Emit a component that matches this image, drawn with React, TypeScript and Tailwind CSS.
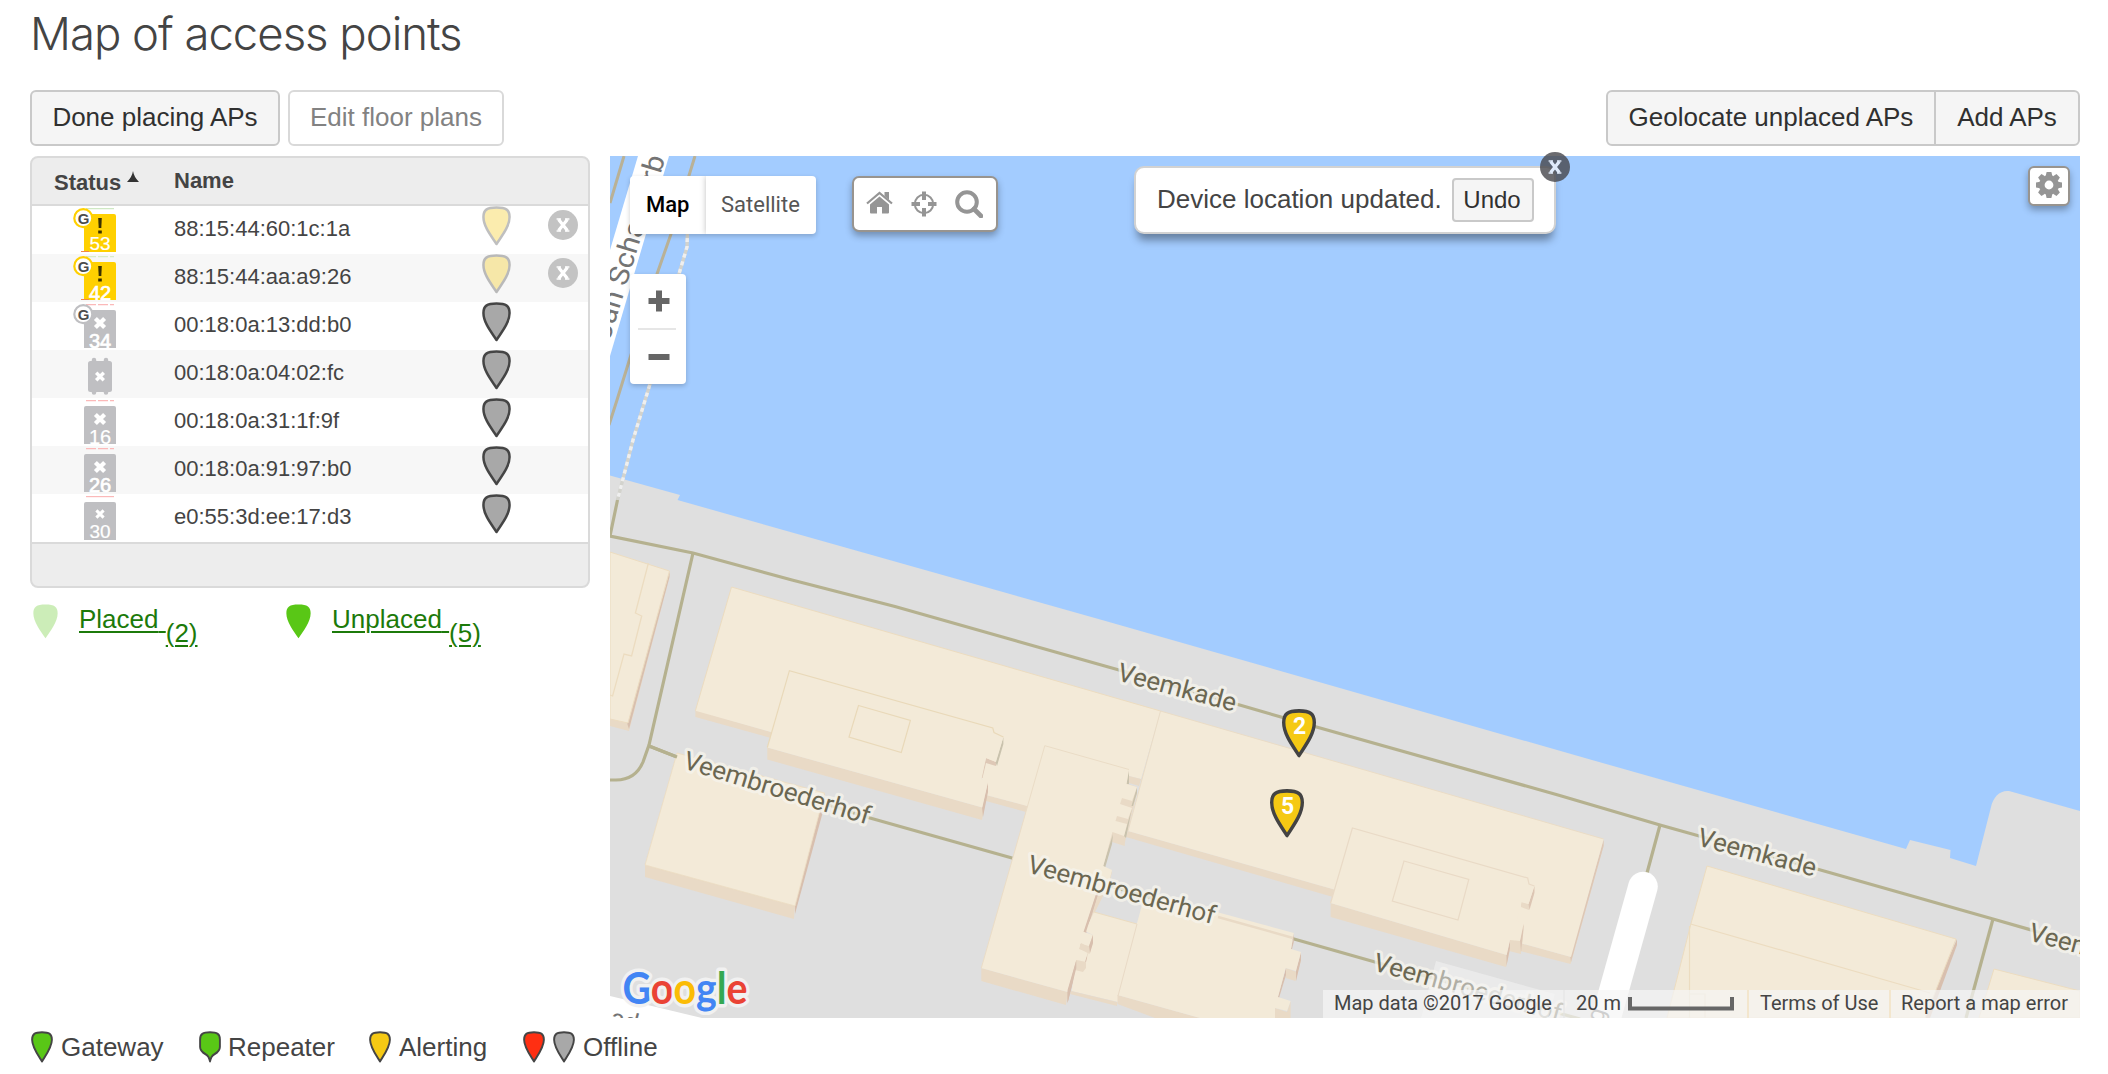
import React from "react";

const PIN_PATH =
  "M15 38 C9.5 30 1.5 20.5 1.5 11 C1.5 4 5 1.5 15 1.5 S28.5 4 28.5 11 C28.5 20.5 20.5 30 15 38 Z";
const REPEATER_PATH =
  "M15 38 C14 33 12.5 30.5 9 29 C4 26.5 1.5 24 1.5 20 V10.5 C1.5 4 5 1.5 15 1.5 S28.5 4 28.5 10.5 V20 C28.5 24 26 26.5 21 29 C17.5 30.5 16 33 15 38 Z";

function Pin({
  fill,
  stroke = "#454545",
  strokeWidth = 2.6,
  d = PIN_PATH,
  className,
}: {
  fill: string;
  stroke?: string;
  strokeWidth?: number;
  d?: string;
  className: string;
}) {
  return (
    <svg viewBox="0 0 30 40" preserveAspectRatio="none" className={className}>
      <path d={d} fill={fill} stroke={stroke} strokeWidth={strokeWidth} strokeLinejoin="round" />
    </svg>
  );
}

type Device = {
  name: string;
  count?: string;
  alerting?: boolean;
  gateway?: boolean;
  placed?: boolean;
  low?: boolean;
  bold?: boolean;
  edge?: string;
};

const devices: Device[] = [
  { name: "88:15:44:60:1c:1a", count: "53", alerting: true, gateway: true, placed: true, edge: "#cfe8c4" },
  { name: "88:15:44:aa:a9:26", count: "42", alerting: true, gateway: true, placed: true, low: true, bold: true, edge: "#d7ecc9" },
  { name: "00:18:0a:13:dd:b0", count: "34", gateway: true, low: true, bold: true, edge: "#fbb9b9" },
  { name: "00:18:0a:04:02:fc" },
  { name: "00:18:0a:31:1f:9f", count: "16", low: true, edge: "#fbb9b9" },
  { name: "00:18:0a:91:97:b0", count: "26", low: true, bold: true, edge: "#fbb9b9" },
  { name: "e0:55:3d:ee:17:d3", count: "30", edge: "#fbb9b9" },
];

function Cross({ cx, cy, r, w }: { cx: number; cy: number; r: number; w: number }) {
  return (
    <path
      d={`M${cx - r} ${cy - r} L${cx + r} ${cy + r} M${cx + r} ${cy - r} L${cx - r} ${cy + r}`}
      stroke="#fff"
      strokeWidth={w}
    />
  );
}

function StatusIcon({ d }: { d: Device }) {
  const color = d.alerting ? "#ffd000" : "#bfbfc2";
  return (
    <svg viewBox="0 0 46 44" className="h-[44px] w-[46px] overflow-visible">
      {d.edge && <path d="M14 .6 H42" stroke={d.edge} strokeWidth="1.2" strokeDasharray={d.low ? "10 2" : undefined} />}
      {d.count ? (
        <>
          <path d="M12 44 V8 Q12 6 14 6 H42 Q44 6 44 8 V44 Z" fill={color} />
          {d.alerting ? (
            <>
              <path d="M26.2 10 H29.8 L29.3 20 H26.7 Z" fill="#3a3000" />
              <rect x="26.2" y="22.5" width="3.6" height="3" fill="#3a3000" />
              <path d="M9 43.500 H17" stroke="#f08a4a" strokeWidth="1" />
            </>
          ) : (
            <Cross cx={28} cy={d.count === "30" ? 18 : 19} r={d.count === "30" ? 3.6 : 4.6} w={d.count === "30" ? 3 : 4.2} />
          )}
          <text
            x="28"
            y={d.low ? 44 : 42}
            textAnchor="middle"
            fontFamily="Liberation Sans, sans-serif"
            fontSize={d.low ? 20 : 19}
            stroke="#fff"
            strokeWidth={d.bold ? 0.7 : 0.2}
            fill="#fff"
          >
            {d.count}
          </text>
        </>
      ) : (
        <>
          <rect x="16" y="9" width="24" height="31" rx="2.5" fill={color} />
          <path d="M22 8 V40.500 M34 8 V40.500" stroke={color} strokeWidth="4.500" strokeLinecap="round" />
          <Cross cx={28} cy={24.5} r={3.8} w={3.4} />
        </>
      )}
      {d.gateway && (
        <>
          <circle cx="11.300" cy="10.200" r="9" fill="#fff" stroke={color} strokeWidth="2.200" />
          <text
            x="11.500"
            y="15.500"
            textAnchor="middle"
            fontFamily="Liberation Sans, sans-serif"
            fontSize="15"
            fontWeight="700"
            fill="#4c4c4c"
          >
            G
          </text>
        </>
      )}
    </svg>
  );
}

function CloseDot({ className, fill, mark = "#fff" }: { className: string; fill: string; mark?: string }) {
  return (
    <svg viewBox="0 0 30 30" className={className}>
      <circle cx="15" cy="15" r="15" fill={fill} />
      <path d="M10.600 9.500 L19.400 20.500 M19.400 9.500 L10.600 20.500" stroke={mark} strokeWidth="3.200" />
      <path d="M8.600 9 H13 M17 9 H21.400 M8.600 21 H13 M17 21 H21.400" stroke={mark} strokeWidth="1.600" />
    </svg>
  );
}

function DeviceTable() {
  return (
    <div className="h-[432px] w-[560px] overflow-hidden rounded-lg border-2 border-[#dadada] bg-[#ededed] text-[22px] text-[#444]">
      <div className="flex h-[48px] items-center border-b-2 border-[#dadada] pl-[22px] font-bold">
        <div className="flex w-[120px] items-center gap-1.5 pt-[3px]">
          Status
          <svg viewBox="0 0 12 11" className="mb-[12px] h-[11px] w-[12px]">
            <path d="M6 0 Q7 6 12 11 H0 Q5 6 6 0 Z" fill="#333" />
          </svg>
        </div>
        <div className="pb-[2px]">Name</div>
      </div>
      {devices.map((d, i) => (
        <div key={d.name} className={`flex h-[48px] items-start ${i % 2 ? "bg-[#f7f7f7]" : "bg-white"}`}>
          <div className="w-[142px] pt-[2px] pl-[40px]">
            <StatusIcon d={d} />
          </div>
          <div className="w-[308px] leading-[45px]">{d.name}</div>
          <Pin
            fill={d.placed ? "#f5c914" : "#a8a8a8"}
            className={d.placed ? "h-[40px] w-[29px] opacity-[.34]" : "h-[40px] w-[29px]"}
          />
          {d.placed && <CloseDot className="mt-1 ml-[37px] h-[30px] w-[30px]" fill="#c3c3c3" />}
        </div>
      ))}
      <div className="h-[46px] border-t-2 border-[#dadada]" />
    </div>
  );
}

function FilterLink({ label, count, faded }: { label: string; count: string; faded?: boolean }) {
  return (
    <div className="flex items-start">
      <Pin fill="#59c716" stroke="none" className={faded ? "-ml-px mt-[2px] h-[37px] w-[27px] opacity-30" : "-ml-px mt-[2px] h-[37px] w-[27px]"} />
      <a className="ml-5 leading-[36px] whitespace-pre text-[#1c7a0a] underline decoration-2 underline-offset-[3px]">{label} </a>
      <a className="mt-[14px] leading-[36px] text-[#1c7a0a] underline decoration-2 underline-offset-[3px]">{count}</a>
    </div>
  );
}

function StreetLabel({ x, y, angle, length, children }: { x: number; y: number; angle: number; length?: number; children: string }) {
  return (
    <text
      transform={`translate(${x} ${y}) rotate(${angle})`}
      textLength={length}
      lengthAdjust="spacingAndGlyphs"
      fontFamily="Roboto, sans-serif"
      fontSize="25.500"
      fill="#6b6752"
      stroke="#f6f4ec"
      strokeOpacity=".8"
      strokeWidth="6"
      strokeLinejoin="round"
      paintOrder="stroke"
    >
      {children}
    </text>
  );
}

const ROOF = "#f3ead8";
const WALL = "#e9dac6";
const EDGE = "#ecdcc0";
const SHADE = "#d8bfae";
const ROAD = "#b5b18f";

function MapCanvas() {
  return (
    <svg viewBox="610 156 1470 862" className="block h-[862px] w-[1470px]">
      <rect x="610" y="156" width="1470" height="862" fill="#a3ccff" />

      {/* bridge */}
      <g fill="none" stroke="#b9b196" strokeWidth="3">
        <path d="M624 156 L610 203" />
        <path d="M695 156 L671 234 L657 274 L630 358 L617 400 L609 425" />
      </g>
      <path d="M638 156 H669 L610 356 V250 Z" fill="#fff" />
      <text
        transform="translate(609.5 341) rotate(-73)"
        fontFamily="Roboto, sans-serif"
        fontSize="28"
        textLength="191"
        lengthAdjust="spacingAndGlyphs"
        fill="#747474"
      >
        Jan Schaeferb
      </text>

      {/* quay */}
      <path
        d="M610 475.5 L680 495 L677.5 500 L1102 620 L1592 760 L1906 849 L1910 840 L1950.5 850 L1950 858 L1976 866 L1991 807 C1993 797 2000 790 2009 791 L2080 811 V1018 H610 Z"
        fill="#dfdfdf"
      />
      <path d="M610 996 L702 1018 H610 Z" fill="#fff" />
      <text transform="translate(609 1025) rotate(15)" fontFamily="Roboto, sans-serif" fontSize="25" fill="#747474">
        ad
      </text>

      <path d="M687.5 230 L687 247 L679 274 L650 384 L633 440 L617.5 500" fill="none" stroke="#d3d3cd" strokeWidth="3.4" />
      <path
        d="M687.5 230 L687 247 L679 274 L650 384 L633 440 L617.5 500"
        fill="none"
        stroke="#efefef"
        strokeWidth="3.4"
        strokeDasharray="4 4"
      />

      {/* streets */}
      <g fill="none" stroke={ROAD} strokeWidth="3.2">
        <path d="M617.5 500 L610 536 L693 553 L792 580 L895 606.5 L1119 670 L1281 717 L1558 795 L1660 825 L1817 869 L1993 919 L2080 944" />
        <path d="M693 553 L649 745 L643 762 C638 774 630 780 616 780 H610" />
        <path d="M649 746 L677 757 L870 818 L1012 858 L1294 939 L1375 962 L1580 1019" />
        <path d="M1660 825 L1647 873" />
        <path d="M1993 919 L1966 1018" />
      </g>
      <path d="M1643 886.5 L1600 1040" stroke="#fff" strokeWidth="29.5" strokeLinecap="round" />

      {/* west block */}
      <path d="M610 719 L628 723 L669.5 571 V577 L629 731 L610 726 Z" fill={WALL} />
      <path d="M669.5 572 V577 L629 729 L627 723 Z" fill={SHADE} />
      <path d="M610 552 L669.5 571 L628 723 L610 719 Z" fill={ROOF} stroke={EDGE} />
      <path d="M648.4 563 L635.4 613 L641.7 616 L631.6 656 L624 654 L612.6 696 L610 695" fill="none" stroke={EDGE} strokeWidth="1.3" />

      {/* south-west block */}
      <path d="M645 865 L795 906 L794 919 L645 877 Z" fill={WALL} />
      <path d="M824.5 793 V806 L795 914 V906 Z" fill={SHADE} />
      <path d="M677 753 L824.5 793 L795 906 L645 865 Z" fill={ROOF} stroke={EDGE} strokeWidth=".8" />
      <path d="M649 746 L677 757" fill="none" stroke={ROAD} strokeWidth="3.2" />

      {/* long warehouse, west half */}
      <path d="M695.4 710 L771 732 V738 L695.4 717 Z" fill={WALL} />
      <path d="M986 795 L1028 806 L1026 812 L986 801 Z" fill={WALL} />
      <path
        d="M731.5 587 L1160.5 711 L1141 779 L1100 769 L1027 806 L986 795 L980 770 L771 732 L695.4 710.7 Z"
        fill={ROOF}
      />
      <path d="M1160.5 711 L731.5 587 L695.4 710.7" fill="none" stroke={EDGE} />
      <path d="M1129 776 L1141 779 L1139 786 L1129 783 Z" fill={WALL} />
      <path d="M767.3 747.5 L982.3 807.5 L988 782 V788 L982 820 L767.3 759.5 Z" fill={WALL} />
      <path d="M988 782 V792 L983 817 L982 807 Z" fill={SHADE} />
      <path d="M986 758 L996 762 V766 L986 763 L982.5 778 H981 Z" fill={SHADE} opacity=".8" />
      <path d="M1003.4 737 V744 L997 766 L995.5 762 Z" fill="#c9c2ad" />
      <path
        d="M789.4 670.7 L992.8 728 L994 732.5 L1003.4 737 L996 762 L986 758 L981.6 779 L988 782 L982.3 807.5 L767.3 747.5 Z"
        fill={ROOF}
      />
      <path
        d="M767.3 747.5 L789.4 670.7 L992.8 728 L994 732.5 L1003.4 737 M858.5 705.5 L910.4 720.5 L901.3 752.5 L849 737 Z"
        fill="none"
        stroke="#e9d9b9"
        strokeWidth="1.2"
      />

      {/* long warehouse, east half */}
      <path d="M1128 831 L1336 890 L1333 897 L1126 837 Z" fill={WALL} />
      <path d="M1520 943 L1571 957 L1603.6 839 V846 L1570.6 964 L1520 951 Z" fill={WALL} />
      <path d="M1603.6 840 V846 L1571 962 L1570 956 Z" fill={SHADE} opacity=".7" />
      <path d="M1160.5 711 L1603.6 839 L1571 957 L1520 943 L1336 890 L1128 831 Z" fill={ROOF} />
      <path d="M1128 831 L1160.5 711 L1603.6 839" fill="none" stroke="#eadcc6" />
      <path d="M1330.6 903 L1506.7 955 L1510 940 L1523.5 924 L1521.7 951 L1510 950 L1506 967 L1330.6 917 Z" fill={WALL} />
      <path d="M1510 940 L1521 943 V954 L1509 951 Z" fill={WALL} />
      <path d="M1523.5 924 V930 L1521 952 L1520 940 Z" fill={SHADE} opacity=".8" />
      <path d="M1534.4 886 V892 L1529 910 L1521 907 V902 L1529 904 Z" fill={WALL} />
      <path d="M1534.4 886 V893 L1529.5 910 L1528.5 904 Z" fill={SHADE} opacity=".8" />
      <path d="M1510 940 V948 L1506.5 966 V955 Z" fill={SHADE} />
      <path
        d="M1352.4 828 L1527.7 878 L1529 884 L1534.4 886 L1528.5 904 L1521.7 902 L1516.5 921 L1523.5 924 L1520 941 L1510 940 L1506.7 955 L1330.6 903 Z"
        fill={ROOF}
      />
      <path
        d="M1330.6 903 L1352.4 828 L1527.7 878 L1529 884 L1534.4 886 M1404 861 L1468.8 879.5 L1458 920 L1392.3 901 Z"
        fill="none"
        stroke={WALL}
        strokeWidth="1.2"
      />

      {/* cross wing */}
      <path d="M981.3 968 L1067.6 992 L1066 1005 L981.3 981 Z" fill={WALL} />
      <path d="M1129 769.5 L1128 784 L1137 787 V793 L1125 842 L1124.7 846 L1112 842 L1103 868 L1112 872 L1109 884 L1084 934 L1093 935 L1090 955 L1086 971 L1076 968 L1067 1003 V990 Z" fill={WALL} />
      <g fill="#c9c2ad">
        <path d="M1129 769.5 V784 H1126.5 Z" />
        <path d="M1137 787 V793 L1133 806 H1131.5 Z" />
        <path d="M1132 808 L1126 838 L1124 836 Z" />
        <path d="M1113 834 L1112 844 L1105 868 L1103 866 Z" />
      </g>
      <g fill={SHADE}>
        <path d="M1098 888 V894 L1086 934 L1084 932 Z" />
        <path d="M1093 935 V942 L1089.5 955 L1088.5 950 Z" />
        <path d="M1087 956 V966 L1085 971 V958 Z" />
        <path d="M1076.3 960 V968 L1067.6 1003 V990 Z" />
      </g>
      <path
        d="M1044.8 745.7 L1129 769.5 L1126.5 784 L1137 787 L1132 801 L1122 798 L1120 804 L1132 808 L1128 819 L1117 816 L1115.5 821 L1127 824 L1124 836 L1112.4 832 L1103.3 866 L1112 870 L1109 882 L1096.7 893 L1084 932 L1093 935 L1089 947 L1081 943 L1079 949 L1088 952 L1085 962 L1076.3 960 L1067.6 992 L981.3 968 Z"
        fill={ROOF}
      />
      <path d="M981.3 968 L1044.8 745.7 L1129 769.5" fill="none" stroke="#eadcc6" />

      {/* southern block */}
      <path d="M1094 912 L1137 924 L1118 1002 L1071.7 991 L1076.3 960 L1086 962 L1093 935 L1085 931 Z" fill={ROOF} />
      <path d="M1094 912 L1137 924" stroke={EDGE} />
      <path d="M1071 991 L1117 1002 V1006 L1070 994 Z" fill={WALL} />
      <path d="M1086 962 V968 L1083 972 L1075 970 L1076.3 960 Z" fill={WALL} />
      <path d="M1093 935 V943 L1089.5 954 L1080 949 V944 L1089 946 Z" fill={WALL} />
      <path d="M1076.3 960 V968 L1067.6 1003 V990 Z M1098 888 V894 L1086 932 H1083.5 Z M1093 935 V943 L1090 953 L1089 946 Z" fill={SHADE} />
      <path d="M1117.5 995 L1200 1018 H1155 L1117.5 1004 Z" fill={WALL} />
      <path d="M1285.7 968 L1297 972 L1301 952 V960 L1295.5 981 L1285.7 978 Z" fill={WALL} />
      <path d="M1290.6 1001 V1018 H1275 V1008 L1287 1012 Z" fill={WALL} />
      <path d="M1301 952 V960 L1296 981 V970 Z M1293.8 933 V942 L1292 949 H1291 Z M1286 968 V975 L1279 998 H1277.5 Z" fill={SHADE} />
      <path
        d="M1142 905 L1165 898 L1293.8 933 L1291 949 L1301 952 L1296 971 L1285.7 968 L1278 997 L1290.6 1001 L1287 1011 L1275 1008 V1018 H1200 L1117.5 995 Z"
        fill={ROOF}
      />
      <path d="M1137 924 L1118 996" stroke={WALL} />
      <path d="M1218 917 L1293 938" stroke={WALL} strokeWidth="2.4" />

      {/* east blocks */}
      <path d="M1957 939 V945 L1930 1018 H1922 Z" fill={SHADE} />
      <path d="M1707 866 L1956 939 L1925 1018 H1667 L1690.6 925 Z" fill={ROOF} stroke={EDGE} />
      <path d="M1690.6 924 L1930 993 M1689.5 926 V1018 M1689.5 994 H1705 V1018" fill="none" stroke={EDGE} strokeWidth="1.2" />
      <path d="M1994 969 L2080 991 V1018 H1979 Z" fill={ROOF} stroke={EDGE} />

      {/* street names */}
      <StreetLabel x={1116} y={680} angle={15} length={122}>Veemkade</StreetLabel>
      <StreetLabel x={1696} y={845} angle={15} length={122}>Veemkade</StreetLabel>
      <StreetLabel x={2027.5} y={940} angle={15} length={122}>Veemkade</StreetLabel>
      <StreetLabel x={682} y={768} angle={17} length={194}>Veembroederhof</StreetLabel>
      <StreetLabel x={1026} y={872} angle={15.6} length={194}>Veembroederhof</StreetLabel>
      <StreetLabel x={1372} y={970} angle={15.5} length={194}>Veembroederhof</StreetLabel>
      <path d="M1436 961 L1555 994 L1548 1018 H1421 Z" fill="#f5f5f5" fillOpacity=".5" />
      <text transform="translate(1602 1024) rotate(-73)" fontFamily="Roboto, sans-serif" fontSize="25" fill="#777">
        g
      </text>

      {/* logo */}
      <text
        x="622.5"
        y="1004"
        fontFamily="Lato, sans-serif"
        fontSize="44"
        fontWeight="700"
        textLength="125"
        lengthAdjust="spacingAndGlyphs"
        stroke="#f1f1f1"
        strokeWidth="7"
        strokeLinejoin="round"
        paintOrder="stroke"
      >
        <tspan fill="#4285f4">G</tspan>
        <tspan fill="#ea4335">o</tspan>
        <tspan fill="#fbbc05">o</tspan>
        <tspan fill="#4285f4">g</tspan>
        <tspan fill="#34a853">l</tspan>
        <tspan fill="#ea4335">e</tspan>
      </text>
    </svg>
  );
}

function MapPin({ n, className }: { n: string; className: string }) {
  return (
    <div className={`absolute h-[49px] w-[34px] ${className}`}>
      <Pin fill="#f5c914" stroke="#434343" strokeWidth={3} className="h-[49px] w-[34px]" />
      <span className="absolute inset-x-0 top-[4px] pl-px text-center font-[Roboto] text-[23px] leading-[28px] font-bold text-white">{n}</span>
    </div>
  );
}

function MapPanel() {
  return (
    <div className="relative h-[862px] w-[1470px]">
      <MapCanvas />

      <div className="absolute top-[20px] left-[20px] flex h-[58px] w-[186px] overflow-hidden rounded-[4px] bg-white font-[Roboto] text-[22px] leading-[58px] shadow-[0_2px_5px_rgba(0,0,0,0.2)]">
        <div className="w-[76px] pl-[16px] font-medium text-black">Map</div>
        <div className="grow pl-[15px] text-[#565656] shadow-[0_0_6px_rgba(0,0,0,0.25)]">Satellite</div>
      </div>

      <div className="absolute top-[118px] left-[20px] flex h-[110px] w-[56px] flex-col items-center rounded-[4px] bg-white shadow-[0_2px_5px_rgba(0,0,0,0.2)]">
        <svg viewBox="0 0 56 110" className="h-[110px] w-[56px]">
          <path d="M18.500 27 H39.500 M29 16.500 V37.500 M18.500 83 H39.500" stroke="#666" strokeWidth="6" />
          <path d="M8 55 H46" stroke="#e6e6e6" strokeWidth="2" />
        </svg>
      </div>

      <div className="absolute top-[20px] left-[242px] flex h-[56px] w-[146px] items-center justify-between rounded-[7px] border-2 border-[#98948f] bg-white pr-[13px] pl-[12px] shadow-[0_4px_7px_rgba(0,0,0,0.3)]">
        <svg viewBox="0 0 27 23" className="mb-[3px] h-[23px] w-[27px]">
          <path d="M1 12.500 L13.500 2 L26 12.500" fill="none" stroke="#959595" strokeWidth="2.200" />
          <path d="M18.500 1 H23 V9 L18.500 5 Z" fill="#959595" />
          <path d="M13.500 5.500 L23 13.500 V21.500 Q23 22.500 22 22.500 H16 V16 H11 V22.500 H5 Q4 22.500 4 21.500 V13.500 Z" fill="#959595" />
        </svg>
        <svg viewBox="0 0 26 26" className="h-[26px] w-[26px]">
          <circle cx="13" cy="13" r="9.200" fill="none" stroke="#959595" strokeWidth="2" />
          <path d="M13 .5 V9 M13 17 V25.500 M.5 13 H9 M17 13 H25.500" stroke="#959595" strokeWidth="4" />
        </svg>
        <svg viewBox="0 0 28 28" className="h-[28px] w-[28px]">
          <circle cx="12" cy="12" r="9.800" fill="none" stroke="#959595" strokeWidth="4" />
          <path d="M19 19 L26 26" stroke="#959595" strokeWidth="4.600" strokeLinecap="round" />
        </svg>
      </div>

      <div className="absolute top-[10px] left-[524px] flex h-[68px] w-[422px] items-start rounded-[10px] border-2 border-[#d2d2d2] bg-white pt-[10px] pl-[21px] text-[26px] text-[#444] shadow-[0_9px_8px_-3px_rgba(0,0,0,0.38)]">
        <span className="w-[295px] leading-[43px] whitespace-nowrap">Device location updated.</span>
        <button className="flex h-[44px] w-[82px] items-center justify-center rounded-[4px] border-2 border-[#c9c9c9] bg-[#f5f5f5] pr-[2px] pb-px text-[24px] text-[#303030]">
          Undo
        </button>
        <CloseDot className="absolute -top-[16px] -right-[16px] h-[30px] w-[30px]" fill="rgba(70,70,75,.8)" mark="#dfeafa" />
      </div>

      <div className="absolute top-[10px] left-[1418px] flex h-[40px] w-[42px] items-center justify-center rounded-[6px] border-2 border-[#98948f] bg-white shadow-[0_4px_7px_rgba(0,0,0,0.3)]">
        <svg viewBox="-13 -13 26 26" className="mb-[2px] h-[26px] w-[26px]" fill="#959595">
          <path
            fillRule="evenodd"
            d="M0 -10 A10 10 0 1 1 0 10 A10 10 0 1 1 0 -10 Z M0 -4.400 A4.400 4.400 0 1 0 0 4.400 A4.400 4.400 0 1 0 0 -4.400 Z"
          />
          {[0, 45, 90, 135, 180, 225, 270, 315].map((a) => (
            <path key={a} transform={`rotate(${a})`} d="M-3.300 -9 L-2.400 -13 H2.400 L3.300 -9 Z" />
          ))}
        </svg>
      </div>

      <MapPin n="2" className="top-[553px] left-[672px]" />
      <MapPin n="5" className="top-[633px] left-[660px]" />

      <div className="absolute right-0 bottom-0 flex h-[28px] bg-[#f5f5f5]/70 font-[Roboto] text-[20px] leading-[26px] whitespace-nowrap text-[#444]">
        <div className="w-[242px] border-r-2 border-[#e4e4e4]/60 pl-[11px]">Map data ©2017 Google</div>
        <div className="flex w-[184px] border-r-2 border-[#f3e6cd] pl-[11px]">
          <span className="w-[52px]">20 m</span>
          <svg viewBox="0 0 106 14" className="mt-[7px] h-[14px] w-[106px]">
            <path d="M2 0 V11.500 H104 V0" fill="none" stroke="#666" strokeWidth="4" />
          </svg>
        </div>
        <div className="w-[142px] border-r-2 border-[#f3e6cd] pl-[11px]">Terms of Use</div>
        <div className="w-[189px] pl-[10px]">Report a map error</div>
      </div>
    </div>
  );
}

export default function App() {
  return (
    <div className="h-[1074px] w-[2108px] overflow-hidden bg-white pr-[28px] pl-[30px] font-['Liberation_Sans',Arial,sans-serif] text-[26px] text-[#444]">
      <h1 className="h-[90px] pt-[4px] font-[Inter] text-[45.5px] leading-[60px] font-light tracking-[-1.02px] text-[#444]">
        Map of access points
      </h1>
      <div className="flex h-[66px] justify-between">
        <div className="flex gap-2">
          <button className="h-[56px] w-[250px] rounded-[6px] border-2 border-[#c9c9c9] bg-[#f5f5f5] pb-[2px] text-[#303030]">
            Done placing APs
          </button>
          <button className="h-[56px] w-[216px] rounded-[6px] border-2 border-[#d9d9d9] bg-white pb-[2px] text-[#828282]">
            Edit floor plans
          </button>
        </div>
        <div className="flex h-[56px] rounded-[6px] border-2 border-[#c9c9c9] bg-[#f5f5f5] text-[#303030]">
          <button className="w-[328px] border-r-2 border-[#c9c9c9] pb-[2px]">Geolocate unplaced APs</button>
          <button className="w-[142px] pb-[2px]">Add APs</button>
        </div>
      </div>
      <div className="flex justify-between">
        <div>
          <DeviceTable />
          <div className="mt-[13px] grid grid-cols-[253px_1fr] pl-[3px]">
            <FilterLink label="Placed" count="(2)" faded />
            <FilterLink label="Unplaced" count="(5)" />
          </div>
        </div>
        <MapPanel />
      </div>
      <div className="flex pt-[13px] pl-px leading-[32px]">
        <div className="flex w-[168px] gap-[8px]">
          <Pin fill="#59c716" className="h-[32px] w-[22px]" />
          Gateway
        </div>
        <div className="flex w-[170px] gap-[7px]">
          <Pin fill="#59c716" d={REPEATER_PATH} className="h-[32px] w-[22px]" />
          Repeater
        </div>
        <div className="flex w-[154px] gap-[8px]">
          <Pin fill="#f5c914" className="h-[32px] w-[22px]" />
          Alerting
        </div>
        <div className="flex gap-[8px]">
          <Pin fill="#ff2f12" className="h-[32px] w-[22px]" />
          <Pin fill="#a8a8a8" className="h-[32px] w-[22px]" />
          Offline
        </div>
      </div>
    </div>
  );
}
